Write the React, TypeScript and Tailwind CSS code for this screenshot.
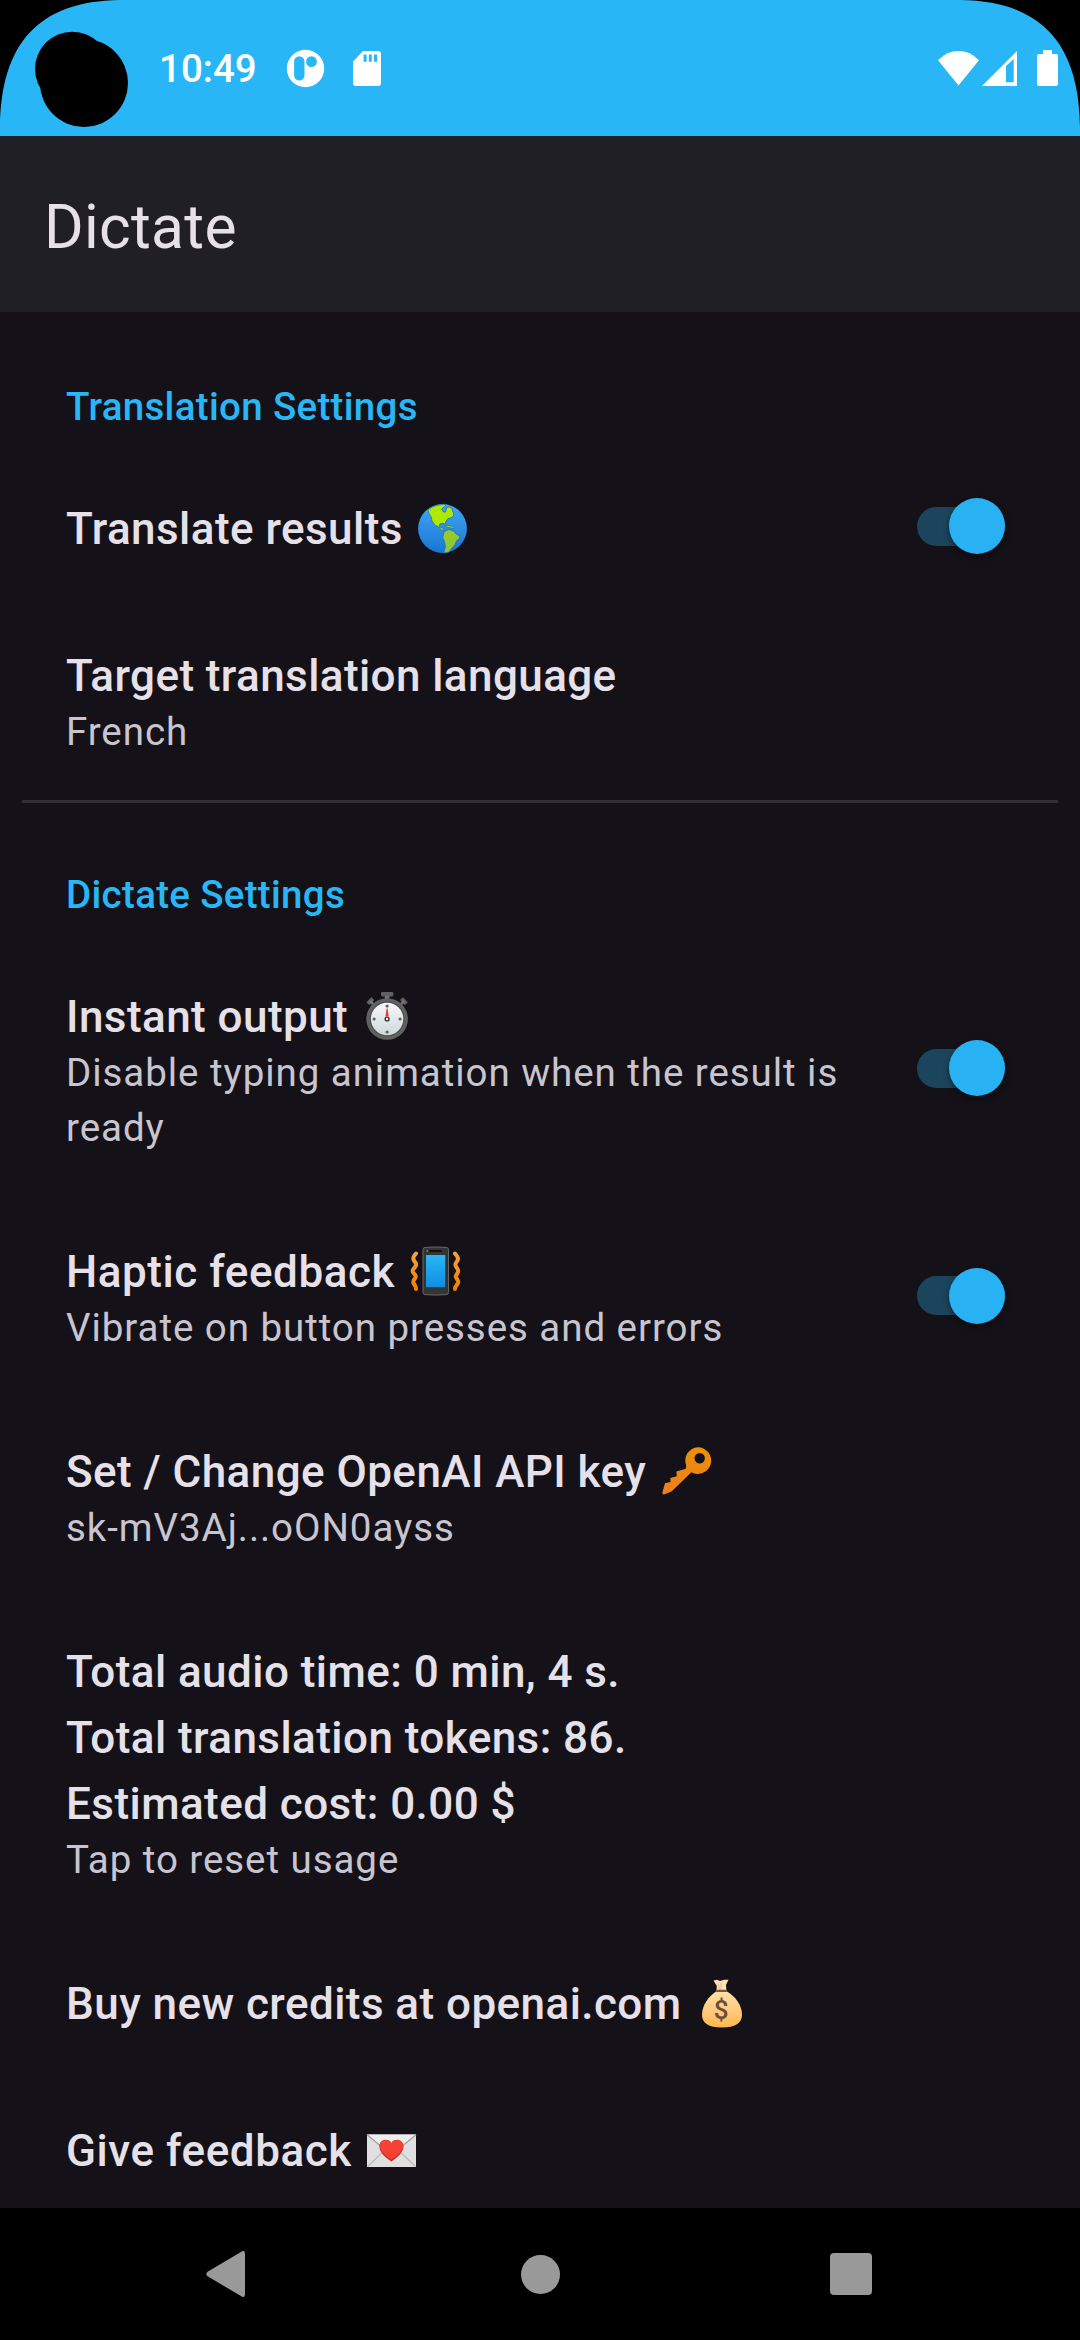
import type { ReactNode } from "react";

const emoji = "ml-[4px] inline-block h-[50px] w-[50px] align-[-10px] overflow-visible";

function Globe() {
  return (
    <svg viewBox="0 0 50 50" className={emoji}>
      <defs>
        <linearGradient id="sea" x1="0" y1="0" x2="0" y2="1">
          <stop offset="0" stopColor="#42a5f5" />
          <stop offset="1" stopColor="#1976d2" />
        </linearGradient>
        <linearGradient id="south" x1="0" y1="0" x2="0" y2="1">
          <stop offset="0" stopColor="#9ccc1f" />
          <stop offset="1" stopColor="#8bc34a" />
        </linearGradient>
      </defs>
      <circle cx="24.5" cy="24.5" r="24.4" fill="url(#sea)" />
      <g stroke="#1b75b8" strokeWidth=".8" strokeLinejoin="round">
        <path fill="#aeea00" d="M10 5.8C15 2 21 .2 28 .4L26.5 2.8 23.6 5 25 7.5 27.5 8.2 28.5 4 31 2.8 34 4.4 34.6 7 36 11 33.5 13.6 30 14.6 27.8 17.5 27 20.2 24.5 19.2 21.8 20 21 22.8 24.6 24 26.8 27 23.5 26 21.5 23.8 17 21 14 17 13.2 13 11 9.5Z" />
        <path fill="#aeea00" d="M27 21.2l4 .3 5.5 2-.4 1.1-6-1.3-3.4-1Z" />
        <path fill="url(#south)" d="M26.2 27.5 31 25.6 36 27.2 38 30 42 32.2 41 35 38.6 36.5 37 40.8 33.4 44.6 31.4 47.8Q28.5 49 25.8 48.8L27.4 42.6 26.5 37.5 24.8 33.5Z" />
      </g>
    </svg>
  );
}

function Stopwatch() {
  return (
    <svg viewBox="0 0 50 50" className="ml-[2px] inline-block h-[50px] w-[50px] overflow-visible align-[-10px]">
      <defs>
        <linearGradient id="face" x1="0" y1="0" x2="0" y2="1">
          <stop offset="0" stopColor="#f7f8f9" />
          <stop offset="1" stopColor="#cfd8dc" />
        </linearGradient>
      </defs>
      <rect x="19" y="0" width="12.4" height="4.4" rx="1.4" fill="#616161" />
      <rect x="22.8" y="4" width="4.6" height="4" fill="#757575" />
      <path d="M5.8 11.6l5-5M44.4 11.6l-5-5" stroke="#616161" strokeWidth="4" strokeLinecap="butt" />
      <path d="M8 9l4 4M42.2 9l-4 4" stroke="#757575" strokeWidth="2.6" />
      <circle cx="25.1" cy="27" r="20.8" fill="#616161" />
      <circle cx="25.1" cy="27" r="17.3" fill="#4a4a4a" />
      <circle cx="25.1" cy="27" r="16.2" fill="url(#face)" />
      <g fill="#616161">
        <circle cx="25.1" cy="14" r="1.6" />
        <circle cx="25.1" cy="40" r="1.6" />
        <circle cx="12.1" cy="27" r="1.6" />
        <circle cx="38.1" cy="27" r="1.6" />
      </g>
      <path d="M24.6 16.500h1l1.1 8h-3.2Z" fill="#f4362a" />
      <circle cx="25.1" cy="27" r="1.9" fill="#fff" stroke="#333" strokeWidth="1.4" />
    </svg>
  );
}

function VibratingPhone() {
  return (
    <svg viewBox="0 0 50 50" className={emoji}>
      <defs>
        <linearGradient id="screen" x1="0" y1="0" x2="0" y2="1">
          <stop offset="0" stopColor="#29b6f6" />
          <stop offset="1" stopColor="#0f8ee0" />
        </linearGradient>
        <linearGradient id="buzz" gradientUnits="userSpaceOnUse" x1="0" y1="4" x2="0" y2="44">
          <stop offset="0" stopColor="#f7a43b" />
          <stop offset="1" stopColor="#f57c00" />
        </linearGradient>
      </defs>
      <path d="M12 2.5Q12 .7 14 .5Q24.7-.5 35.5.5Q37.500.7 37.5 2.5V45.5Q37.5 47.3 35.5 47.6Q24.7 48.6 14 47.6Q12 47.3 12 45.5Z" fill="#343434" stroke="#666" strokeWidth="1" />
      <rect x="15" y="8" width="19.2" height="32.2" fill="url(#screen)" />
      <rect x="18" y="3" width="13" height="2" rx="1" fill="#111" />
      <circle cx="16.2" cy="4" r="1" fill="#777" />
      <g fill="none" stroke="url(#buzz)" strokeWidth="4" strokeLinecap="round" strokeLinejoin="round">
        <path d="M5 6.5C1 11 2 12.5 4 15S5 19 2.5 22 3 26 4.5 28.5 1 33 2.5 36 5 39 5 42" />
        <path d="M44 6.5C48 11 47.5 12.5 45.5 15S44.500 19 46.5 22 46.5 26 45 28.5 48.5 33 47 36 44 39 44 42" />
      </g>
    </svg>
  );
}

function Key() {
  return (
    <svg viewBox="0 0 50 50" className={emoji}>
      <defs>
        <linearGradient id="brass" x1="0" y1="0" x2="0" y2="1">
          <stop offset="0" stopColor="#ec9008" />
          <stop offset="1" stopColor="#ef7f1a" />
        </linearGradient>
      </defs>
      <path fill="url(#brass)" fillRule="evenodd" d="M36 .3a13.3 13.3 0 1 1-6.6 24.9L9.5 44.6 2 47.5Q0 47.5.4 45.5L3 36.2 8.6 35 8.4 31 14.8 29.2 14.4 24.6 23.8 21.8 24.2 18.5A13.3 13.3 0 0 1 36 .3ZM37.7 6a5.2 5.2 0 1 0 0 10.4 5.2 5.2 0 0 0 0-10.4Z" />
    </svg>
  );
}

function MoneyBag() {
  return (
    <svg viewBox="0 0 50 50" className={emoji}>
      <defs>
        <linearGradient id="sack" x1="0" y1="0" x2="0" y2="1">
          <stop offset="0" stopColor="#ffe0a3" />
          <stop offset=".5" stopColor="#ffcc80" />
          <stop offset="1" stopColor="#ffb74d" />
        </linearGradient>
      </defs>
      <path d="M16.500 1.500 20 .8 23 2 27 .8 31.5.8 29 6 29.500 12H19.500L19.800 7Z" fill="#ffe0b2" />
      <path d="M24 4v7M21.5 5l1 6" stroke="#d7b98a" strokeWidth=".8" />
      <path d="M19 12.500H30C38 17 45 26 45 36 45 44 38 48.500 24.800 48.500S5 44 5 36C5 26 12 17 19 12.500Z" fill="url(#sack)" />
      <rect x="19.5" y="10.8" width="10.2" height="2.2" rx="1" fill="#795548" />
      <text x="24.4" y="40" textAnchor="middle" fontFamily="Roboto" fontWeight="500" fontSize="26" fill="#6d4c41">$</text>
    </svg>
  );
}

function LoveLetter() {
  return (
    <svg viewBox="0 0 50 50" className={emoji}>
      <rect x="0" y="8.5" width="49" height="32.5" fill="#e0e0e0" />
      <path d="M0 8.5H49L24.5 30Z" fill="#eeeeee" />
      <path d="M0 8.8 24.5 29 49 8.8" fill="none" stroke="#9e9e9e" strokeWidth="1.3" />
      <path d="M.5 40.5 17 25M48.5 40.5 32 25" stroke="#b8b8b8" strokeWidth="1.1" />
      <path d="M24.4 35.500C19 31.500 12.400 27 12.400 20.500 12.400 13 21.500 11.800 24.400 17 27.300 11.800 36.400 13 36.400 20.500 36.400 27 29.800 31.500 24.400 35.500Z" fill="#c62828" />
      <path d="M24.4 33.800C19 30 13 26 12.800 20 12.600 13.200 21.500 12.200 24.400 17 27.300 12.200 36 13.200 35.800 20 35.600 26 29.800 30 24.400 33.800Z" fill="#f44336" />
    </svg>
  );
}

function Toggle() {
  return (
    <div className="mb-[7px] flex h-[56px] w-[88px] shrink-0 items-center rounded-full">
      <div className="flex h-[39px] w-[88px] items-center justify-end rounded-full bg-[#1b455d]">
        <div className="h-[56px] w-[56px] shrink-0 rounded-full bg-[#29b2f3] shadow-[0_3px_6px_rgba(0,0,0,0.45)]" />
      </div>
    </div>
  );
}

function Category({ children, className }: { children: ReactNode; className: string }) {
  return (
    <h2 className={`px-[66px] text-[38.5px] leading-[55px] font-medium tracking-[0.0082em] text-[#29b6f6] ${className}`}>
      {children}
    </h2>
  );
}

type PreferenceProps = {
  title: string[];
  icon?: ReactNode;
  summary?: string;
  toggle?: boolean;
  tracking?: string;
};

function Preference({ title, icon, summary, toggle, tracking = "tracking-[0.01em]" }: PreferenceProps) {
  return (
    <div className="flex shrink-0 items-center justify-between pr-[75px] pl-[66px]">
      <div className={summary ? "pt-[40px] pb-[44px]" : "pt-[40px] pb-[41px]"}>
        {title.map((line, i) => (
          <div key={line} className={`h-[66px] text-[44px] leading-[66px] font-medium whitespace-nowrap text-[#e6e1e9] ${tracking}`}>
            {line}
            {i === title.length - 1 && icon ? <> {icon}</> : null}
          </div>
        ))}
        {summary && (
          <p className="-mt-[5px] w-[800px] text-[38.5px] leading-[55px] tracking-[0.0245em] text-[#c9c5d0]">{summary}</p>
        )}
      </div>
      {toggle && <Toggle />}
    </div>
  );
}

function StatusBar() {
  return (
    <header className="relative flex h-[136px] shrink-0 items-center bg-[#29b6f6] pr-[22px] pl-[159px] text-white">
      <svg viewBox="0 0 1080 136" className="absolute inset-0 h-[136px] w-[1080px]">
        <path d="M0 0H120C38 1 1 44 0 127ZM1080 0H960C1042 1 1079 44 1080 127Z" />
        <circle cx="72.3" cy="69" r="37.3" />
        <circle cx="84" cy="83" r="44" />
      </svg>
      <span className="w-[127px] pt-[2px] text-[38.5px] leading-[46px] font-medium">10:49</span>
      <svg viewBox="0 0 40 40" className="h-[40px] w-[40px]">
        <path
          fill="currentColor"
          fillRule="evenodd"
          d="M19.5 1.8a18.7 18.7 0 1 1 0 37.400 18.7 18.7 0 0 1 0-37.400ZM13.3 8.200a5.200 5.200 0 0 0-5.200 5.200v14a5.200 5.200 0 0 0 10.400 0v-14a5.200 5.200 0 0 0-5.200-5.200ZM25.5 8.200a5.400 5.400 0 1 0 0 10.800 5.400 5.400 0 0 0 0-10.800Z"
        />
      </svg>
      <svg viewBox="0 0 28 35" className="ml-[26.5px] h-[35px] w-[28px]">
        <path
          fill="currentColor"
          fillRule="evenodd"
          d="M10 0H25Q28 0 28 3V32Q28 35 25 35H3Q0 35 0 32V10.5ZM10.6 3.600v7.200h3V3.600ZM15.8 3.600v7.200h3V3.600ZM21 3.600v7.200h3.200V3.600Z"
        />
      </svg>
      <div className="ml-auto flex items-center">
        <svg viewBox="0 0 41 35" className="mr-[3px] h-[35px] w-[41px]">
          <path fill="currentColor" d="M20.5 34.5 0 9.300Q9 0 20.5 0T41 9.300Z" />
        </svg>
        <svg viewBox="0 0 35 35" className="mr-[20px] h-[35px] w-[35px]">
          <path fill="currentColor" fillRule="evenodd" d="M35 0V35H0ZM24 15V31.300H31.700V8Z" />
        </svg>
        <svg viewBox="0 0 21 36" className="h-[36px] w-[21px]">
          <path fill="currentColor" d="M6 0H15V4H19Q21 4 21 6V34Q21 36 19 36H2Q0 36 0 34V6Q0 4 2 4H6Z" />
        </svg>
      </div>
    </header>
  );
}

function NavigationBar() {
  return (
    <nav className="flex h-[132px] shrink-0 items-center justify-between bg-black pr-[208px] pl-[206px]">
      <svg viewBox="0 0 41 46" className="h-[46px] w-[41px]">
        <path fill="#999" d="M34.5 1.200Q39-2 39 3V43Q39 48 34.5 44.800L1.600 25.300Q-1 23 1.600 20.700Z" />
      </svg>
      <div className="ml-[3px] h-[39px] w-[39px] rounded-full bg-[#999]" />
      <div className="h-[42px] w-[42px] rounded-[4px] bg-[#999]" />
    </nav>
  );
}

export default function App() {
  return (
    <div className="flex h-[2340px] w-[1080px] flex-col overflow-hidden bg-[#141218] font-['Roboto',sans-serif]">
      <StatusBar />
      <div className="flex h-[176px] shrink-0 items-center bg-[#211f26] px-[44px] pt-[6px]">
        <h1 className="text-[60.5px] leading-[77px] tracking-[0.3px] text-[#e6e1e9]">Dictate</h1>
      </div>
      <main className="flex min-h-0 flex-1 flex-col overflow-hidden">
        <Category className="pt-[67px] pb-[22px]">Translation Settings</Category>
        <Preference title={["Translate results"]} icon={<Globe />} toggle />
        <Preference title={["Target translation language"]} summary="French" tracking="tracking-[0.00937em]" />
        <hr className="mx-[22px] -mt-[3px] h-[3px] shrink-0 border-0 bg-[#323036]" />
        <Category className="pt-[64px] pb-[22px]">Dictate Settings</Category>
        <Preference title={["Instant output"]} icon={<Stopwatch />} summary="Disable typing animation when the result is ready" toggle />
        <Preference
          title={["Haptic feedback"]}
          icon={<VibratingPhone />}
          summary="Vibrate on button presses and errors"
          toggle
          tracking="tracking-[0.0125em]"
        />
        <Preference title={["Set / Change OpenAI API key"]} icon={<Key />} summary="sk-mV3Aj...oON0ayss" />
        <Preference
          title={["Total audio time: 0 min, 4 s.", "Total translation tokens: 86.", "Estimated cost: 0.00 $"]}
          summary="Tap to reset usage"
        />
        <Preference title={["Buy new credits at openai.com"]} icon={<MoneyBag />} />
        <Preference title={["Give feedback"]} icon={<LoveLetter />} tracking="tracking-[0.0125em]" />
      </main>
      <NavigationBar />
    </div>
  );
}
